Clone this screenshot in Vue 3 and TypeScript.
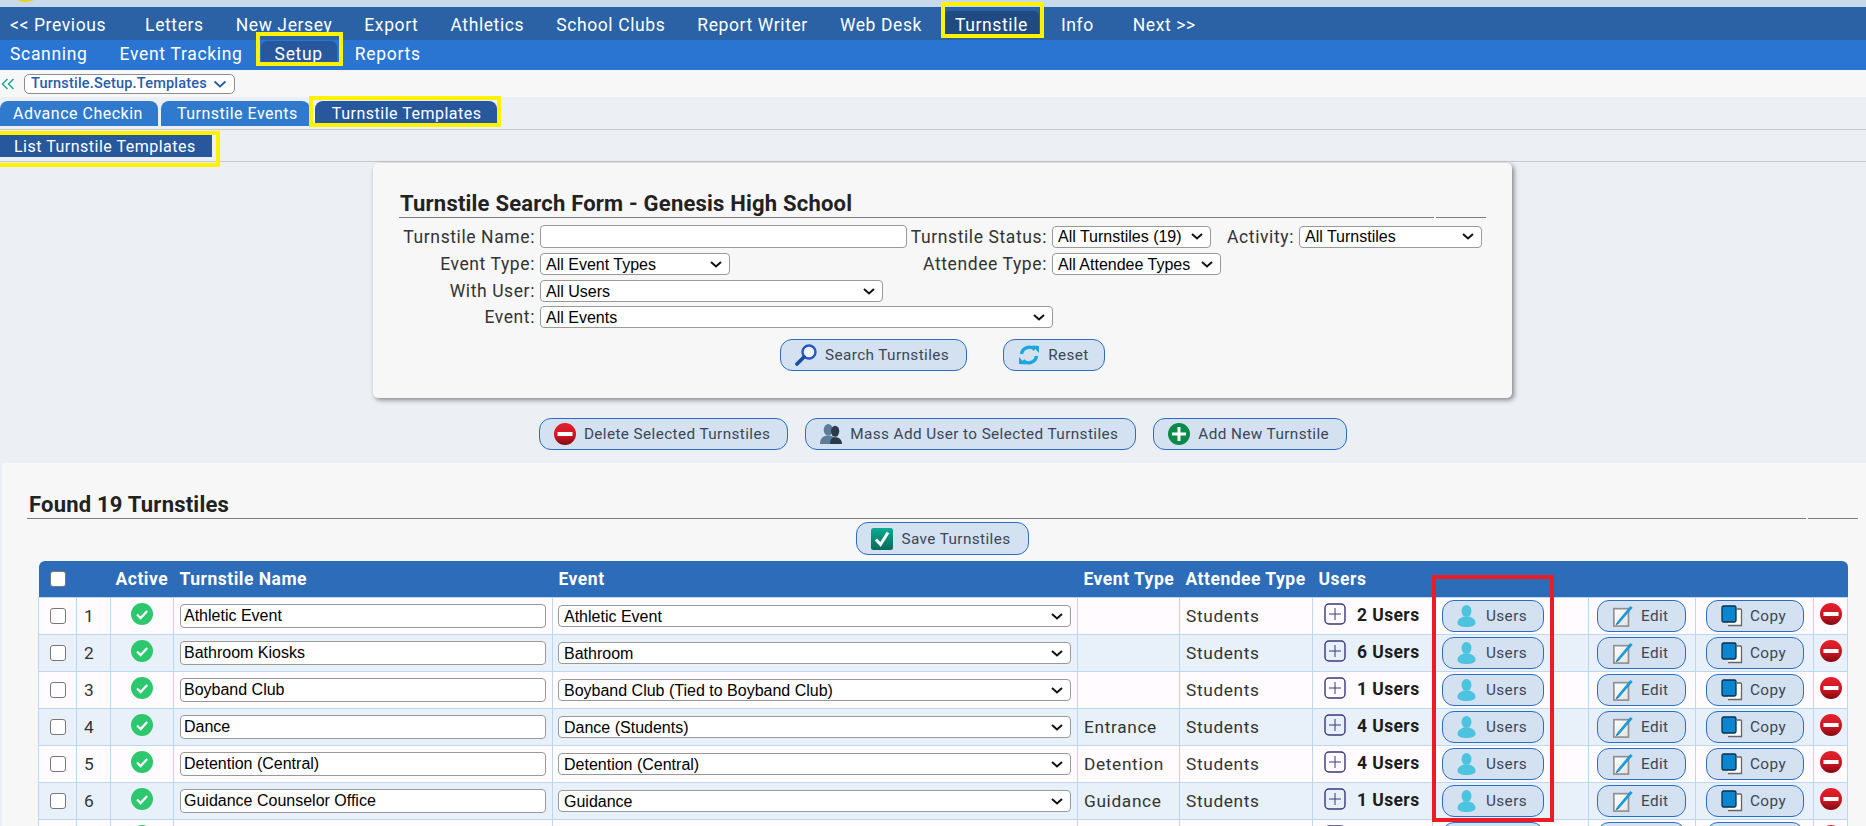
<script setup lang="ts">
interface Row { n: number; name: string; event: string; type: string; users: number; partial?: boolean }
const navMain = ['Letters', 'New Jersey', 'Export', 'Athletics', 'School Clubs', 'Report Writer', 'Web Desk']
const rows: Row[] = [
  { n: 1, name: 'Athletic Event', event: 'Athletic Event', type: '', users: 2 },
  { n: 2, name: 'Bathroom Kiosks', event: 'Bathroom', type: '', users: 6 },
  { n: 3, name: 'Boyband Club', event: 'Boyband Club (Tied to Boyband Club)', type: '', users: 1 },
  { n: 4, name: 'Dance', event: 'Dance (Students)', type: 'Entrance', users: 4 },
  { n: 5, name: 'Detention (Central)', event: 'Detention (Central)', type: 'Detention', users: 4 },
  { n: 6, name: 'Guidance Counselor Office', event: 'Guidance', type: 'Guidance', users: 1 },
  { n: 7, name: '', event: '', type: '', users: 0, partial: true }
]
</script>

<template>
  <div class="page">
    <svg class="sprite" aria-hidden="true">
      <defs>
        <linearGradient id="redG" x1="0" y1="0" x2="0" y2="1"><stop offset="0" stop-color="#e3202c" /><stop offset="0.55" stop-color="#d01722" /><stop offset="1" stop-color="#800a12" /></linearGradient>
        <linearGradient id="tealG" x1="0" y1="0" x2="0" y2="1"><stop offset="0" stop-color="#0bab92" /><stop offset="1" stop-color="#056b58" /></linearGradient>
        <linearGradient id="paperG" x1="0" y1="0" x2="1" y2="1"><stop offset="0" stop-color="#ffffff" /><stop offset="1" stop-color="#e2e2e2" /></linearGradient>
        <symbol id="i-check" viewBox="0 0 22 22"><circle cx="11" cy="11" r="11" fill="#2dc76d" /><path d="M6 11.500l3.600 3.600L16.200 8" fill="none" stroke="#fff" stroke-width="2.200" /></symbol>
        <symbol id="i-plus" viewBox="0 0 22 22"><rect x="1" y="1" width="20" height="20" rx="4" fill="none" stroke="#38387e" stroke-width="1.400" /><path d="M11 5v12M5 11h12" stroke="#38387e" stroke-width="1" /></symbol>
        <symbol id="i-user" viewBox="0 0 18 22"><ellipse cx="9" cy="6" rx="5" ry="6" fill="#4cc3df" /><path d="M0 18c0-4 3.500-5.500 6-6.500h6c2.500 1 6 2.500 6 6.500 0 2.500-4 4-9 4s-9-1.500-9-4z" fill="#4cc3df" /></symbol>
        <symbol id="i-edit" viewBox="0 0 22 24"><rect x="1" y="4" width="16" height="19" fill="url(#paperG)" stroke="#8f8f8f" stroke-width="1.800" /><path d="M4.500 18.500L19 1l2.500 2L6.500 20.500z" fill="#1a9ad6" /><path d="M4.500 18.500L3 22l3.500-1.500z" fill="#0c6c9c" /></symbol>
        <symbol id="i-copy" viewBox="0 0 22 22"><path d="M7 4h14v17H7z" fill="#fff" /><path d="M16 4h3.500q1 0 1 1v15.500H7" fill="none" stroke="#666" stroke-width="1.300" /><rect x="1" y="1" width="14" height="16" rx="1.500" fill="#0a86d0" stroke="#0b2f4a" stroke-width="1.300" /></symbol>
        <symbol id="i-del" viewBox="0 0 22 22"><circle cx="11" cy="11" r="11" fill="url(#redG)" /><rect x="3.500" y="9" width="15" height="4" fill="#fff" /></symbol>
        <symbol id="i-add" viewBox="0 0 22 22"><circle cx="11" cy="11" r="11" fill="#0a8a48" /><path d="M11 4v14M4 11h14" stroke="#fff" stroke-width="3" /></symbol>
        <symbol id="i-mass" viewBox="0 0 24 22"><ellipse cx="9" cy="6.500" rx="5" ry="6.500" fill="#5c7c98" /><path d="M0 22c0-6 3-8 6-9h6c3 1 5 3 5 9z" fill="#5c7c98" /><ellipse cx="16.500" cy="8" rx="4.500" ry="6" fill="#2b3b4b" /><path d="M11 22c0-5 1.500-6.500 4-7.500h3c3 1 6 2.500 6 7.500z" fill="#2b3b4b" /></symbol>
        <symbol id="i-search" viewBox="0 0 22 22"><circle cx="14" cy="8" r="6.500" fill="#eef2fd" stroke="#2658c4" stroke-width="2.400" /><path d="M9 13l-7 7" stroke="#1e4e9e" stroke-width="3.800" stroke-linecap="round" /></symbol>
        <symbol id="i-reset" viewBox="0 0 22 22"><path d="M3.500 10A8 8 0 0 1 17 5.500" fill="none" stroke="#1aa7e0" stroke-width="3.400" /><path d="M14 1.500L21 2v7z" fill="#1aa7e0" /><path d="M18.500 12A8 8 0 0 1 5 16.500" fill="none" stroke="#1aa7e0" stroke-width="3.400" /><path d="M8 20.500L1 20v-7z" fill="#1aa7e0" /></symbol>
        <symbol id="i-save" viewBox="0 0 22 22"><rect width="22" height="22" rx="2.500" fill="url(#tealG)" /><path d="M5 11.500l4.500 5L17 4.500" fill="none" stroke="#fff" stroke-width="3" /></symbol>
      </defs>
    </svg>

    <div class="topstrip"><span class="logo"></span></div>
    <nav class="nav nav-main">
      <a class="nav-item nav-edge">&lt;&lt; Previous</a>
      <a v-for="item in navMain" :key="item" class="nav-item">{{ item }}</a>
      <a class="nav-item active">Turnstile</a>
      <a class="nav-item">Info</a>
      <a class="nav-item nav-edge-next">Next &gt;&gt;</a>
    </nav>
    <nav class="nav nav-sub">
      <a class="nav-item">Scanning</a>
      <a class="nav-item">Event Tracking</a>
      <a class="nav-item active">Setup</a>
      <a class="nav-item">Reports</a>
    </nav>

    <div class="crumb">
      <svg class="crumb-back" viewBox="0 0 14 14"><path d="M6.500 2L1.500 7l5 5M12.500 2l-5 5 5 5" fill="none" stroke="#1ea790" stroke-width="1.500" /></svg>
      <span class="crumb-pill">Turnstile.Setup.Templates
        <svg class="crumb-chev" viewBox="0 0 14 8"><path d="M1.500 1.500L7 6.500l5.500-5" fill="none" stroke="#2a5caa" stroke-width="1.800" /></svg>
      </span>
    </div>

    <div class="tabs">
      <a class="tab">Advance Checkin</a>
      <a class="tab">Turnstile Events</a>
      <a class="tab active">Turnstile Templates</a>
    </div>
    <div class="subtabs">
      <a class="subtab">List Turnstile Templates</a>
    </div>

    <section class="card">
      <h2 class="title"><span>Turnstile Search Form - Genesis High School</span></h2>
      <div class="form">
        <label class="lbl">Turnstile Name:</label>
        <input class="inp w-name" type="text" />
        <label class="lbl">Turnstile Status:</label>
        <select class="sel w-status"><option>All Turnstiles (19)</option></select>
        <label class="lbl">Activity:</label>
        <select class="sel w-activity"><option>All Turnstiles</option></select>

        <label class="lbl">Event Type:</label>
        <select class="sel w-type"><option>All Event Types</option></select>
        <label class="lbl">Attendee Type:</label>
        <select class="sel w-att"><option>All Attendee Types</option></select>
        <span></span><span></span>

        <label class="lbl">With User:</label>
        <select class="sel w-user span3"><option>All Users</option></select>
        <span></span><span></span>

        <label class="lbl">Event:</label>
        <select class="sel w-event span3"><option>All Events</option></select>
      </div>
      <div class="card-actions">
        <button class="btn"><svg class="ic"><use href="#i-search" /></svg>Search Turnstiles</button>
        <button class="btn btn-reset"><svg class="ic"><use href="#i-reset" /></svg>Reset</button>
      </div>
    </section>

    <div class="actions">
      <button class="btn"><svg class="ic"><use href="#i-del" /></svg>Delete Selected Turnstiles</button>
      <button class="btn"><svg class="ic"><use href="#i-mass" /></svg>Mass Add User to Selected Turnstiles</button>
      <button class="btn"><svg class="ic"><use href="#i-add" /></svg>Add New Turnstile</button>
    </div>

    <main class="panel">
      <h2 class="title found-title"><span>Found 19 Turnstiles</span></h2>
      <div class="save-row">
        <button class="btn btn-save"><svg class="ic"><use href="#i-save" /></svg>Save Turnstiles</button>
      </div>
      <table class="grid">
        <colgroup>
          <col class="c1" /><col class="c2" /><col class="c3" /><col class="c4" /><col class="c5" /><col class="c6" /><col class="c7" /><col class="c8" /><col class="c9" /><col class="c10" /><col class="c11" /><col class="c12" />
        </colgroup>
        <thead>
          <tr>
            <th class="center"><input class="chk" type="checkbox" /></th>
            <th></th>
            <th class="th-active">Active</th>
            <th>Turnstile Name</th>
            <th>Event</th>
            <th>Event Type</th>
            <th>Attendee Type</th>
            <th>Users</th>
            <th></th><th></th><th></th><th></th>
          </tr>
        </thead>
        <tbody>
          <tr v-for="row in rows" :key="row.n">
            <td class="center"><input class="chk" type="checkbox" /></td>
            <td class="num">{{ row.partial ? '' : row.n }}</td>
            <td class="center"><svg class="i22 raise"><use href="#i-check" /></svg></td>
            <td><input class="inp row-inp" type="text" :value="row.name" /></td>
            <td class="ev"><select class="sel row-sel"><option>{{ row.event }}</option></select></td>
            <td class="txt">{{ row.type }}</td>
            <td class="txt">{{ row.partial ? '' : 'Students' }}</td>
            <td class="users-cell"><svg class="i22"><use href="#i-plus" /></svg><b>{{ row.partial ? '' : row.users + ' Users' }}</b></td>
            <td class="b-users"><button class="btn btn-row"><svg class="ic ic-user"><use href="#i-user" /></svg>{{ row.partial ? '' : 'Users' }}</button></td>
            <td class="b-edit"><button class="btn btn-row"><svg class="ic ic-edit"><use href="#i-edit" /></svg>{{ row.partial ? '' : 'Edit' }}</button></td>
            <td class="b-copy"><button class="btn btn-row"><svg class="ic ic-copy"><use href="#i-copy" /></svg>{{ row.partial ? '' : 'Copy' }}</button></td>
            <td class="center"><svg class="i22 raise"><use href="#i-del" /></svg></td>
          </tr>
        </tbody>
      </table>
    </main>

    <i class="mark yellow m1"></i>
    <i class="mark yellow m2"></i>
    <i class="mark yellow m3"></i>
    <i class="mark yellow m4"></i>
    <i class="mark red m5"></i>
  </div>
</template>

<style>
html, body { margin: 0; height: 100%; overflow: hidden; background: #eceff4; }
</style>

<style scoped>
.page { position: relative; width: 1866px; height: 826px; overflow: hidden; font-family: Roboto, "Liberation Sans", sans-serif; color: #333; background: #eceff4; }
.sprite { position: absolute; width: 0; height: 0; }

.topstrip { height: 7px; background: #c9d9ec; position: relative; overflow: hidden; }
.logo { position: absolute; left: 14px; top: -10px; width: 23px; height: 12px; border-radius: 50%; background: #e8d41c; }

.nav { display: flex; align-items: flex-end; color: #fff; font-size: 17.5px; letter-spacing: 0.6px; }
.nav-main { height: 33px; background: #2a62a5; padding-left: 10px; }
.nav-sub { height: 30px; background: #2b75d2; padding-left: 10px; letter-spacing: 0.68px; }
.nav-item { display: flex; align-items: center; padding: 0 16px; white-space: nowrap; }
.nav-main .nav-item { height: 27px; margin-bottom: 2px; }
.nav-sub .nav-item { height: 25px; margin-bottom: 4px; }
.nav-item:first-child { padding-left: 0; }
.nav-edge { margin-right: 7px; }
.nav-edge-next { margin-left: 7px; }
.nav-item.active { background: #204a82; border-radius: 5px 5px 0 0; padding: 0 11px; margin-left: 6px; margin-right: 6px; }
.nav-sub .nav-item.active { background: #27589e; padding: 0 14px; margin-left: 2px; margin-right: 2px; border-radius: 6px; }

.crumb { height: 27px; background: #f7f7f7; display: flex; align-items: center; }
.crumb-back { width: 14px; height: 14px; margin: 0 9px 0 1px; }
.crumb-pill { display: flex; align-items: center; box-sizing: border-box; height: 20px; width: 211px; padding-left: 6px; background: #fff; border: 1px solid #8d8d8d; border-radius: 5px; color: #2a5caa; font-size: 14.5px; font-weight: 500; letter-spacing: 0.2px; white-space: nowrap; }
.crumb-chev { width: 14px; height: 8px; margin-left: 6px; }

.tabs { height: 33px; box-sizing: border-box; border-bottom: 1px solid #c8c8c8; display: flex; align-items: flex-end; padding-bottom: 3px; gap: 3px; }
.tab { display: flex; align-items: center; height: 25px; padding: 0 15px 0 13px; background: #2f7acc; color: #fff; font-size: 16px; letter-spacing: 0.5px; border-radius: 8px 8px 0 0; white-space: nowrap; }
.tab:nth-child(2) { padding: 0 12px 0 16px; }
.tab.active { background: #27589e; margin-left: 2px; padding: 0 15px 0 17px; }
.subtabs { height: 32px; box-sizing: border-box; border-bottom: 1px solid #c8c8c8; padding-top: 4px; }
.subtab { display: flex; align-items: center; width: 212px; box-sizing: border-box; height: 23px; padding: 1px 0 0 14px; background: #27589e; color: #fff; font-size: 16px; letter-spacing: 0.5px; white-space: nowrap; }

.card { box-sizing: border-box; width: 1139px; height: 235px; margin: 1px 0 0 373px; padding: 28px 26px 0 26px; background: #f7f7f7; border-radius: 5px; box-shadow: 2px 2px 5px rgba(0,0,0,.45); }
.title { display: flex; gap: 2px; margin: 0; font-size: 22px; line-height: 26px; font-weight: 700; color: #222; letter-spacing: 0.21px; }
.title span { flex: 1; border-bottom: 1px solid #7a7a7a; padding-left: 1px; }
.title::after { content: ''; width: 50px; border-bottom: 1px solid #7a7a7a; }
.form { display: grid; grid-template-columns: 141px 372px 140px 174px 73px 183px; grid-template-rows: 27px 28px 26px 26px; margin-top: 5px; }
.lbl { font-size: 17.5px; letter-spacing: 0.6px; color: #333; padding-right: 5px; align-self: center; white-space: nowrap; justify-self: end; }
.inp, .sel { box-sizing: border-box; font-family: "Liberation Sans", Arial, sans-serif; font-size: 16px; color: #000; background-color: #fff; border: 1px solid #999; border-radius: 4px; align-self: center; justify-self: start; }
.inp { height: 23px; padding: 0 3px; outline: none; }
.sel { appearance: none; height: 22px; padding: 0 22px 0 5px; background-image: url("data:image/svg+xml,%3Csvg xmlns='http://www.w3.org/2000/svg' width='12' height='7' viewBox='0 0 12 7'%3E%3Cpath d='M1 1l5 4.500 5-4.500' fill='none' stroke='%23111' stroke-width='2'/%3E%3C/svg%3E"); background-repeat: no-repeat; background-position: right 7px center; }
.span3 { grid-column: span 3; }
.w-name { width: 367px; }
.w-status { width: 159px; }
.w-activity { width: 183px; }
.w-type { width: 190px; }
.w-att { width: 169px; }
.w-user { width: 343px; }
.w-event { width: 513px; }

.card-actions { display: flex; gap: 36px; margin: 9px 0 0 381px; }
.btn { display: inline-flex; align-items: center; box-sizing: border-box; height: 32px; padding: 0 17px 0 14px; background: #d3e1f1; border: 1px solid #2a6cc6; border-radius: 12px; color: #3c4656; font-family: Roboto, sans-serif; font-size: 15.3px; letter-spacing: 0.4px; white-space: nowrap; }
.btn-save { height: 33px; }
.btn-reset { padding-right: 15px; }
.ic { width: 22px; height: 22px; margin-right: 8px; flex: none; }

.actions { display: flex; justify-content: center; gap: 17px; margin-top: 20px; height: 32px; padding-left: 20px; }
.panel { box-sizing: border-box; height: 363px; margin: 13px 0 0 2px; padding: 29px 8px 0 25px; background: #f7f7f7; position: relative; }
.found-title span { padding-left: 2px; }
.save-row { display: flex; justify-content: center; margin: 3px 0 6px; width: 1831px; }

.grid { table-layout: fixed; width: 1809px; margin-left: 11px; border-collapse: collapse; font-size: 17.3px; }
.c1 { width: 38px; } .c2 { width: 34px; } .c3 { width: 63px; } .c4 { width: 379px; } .c5 { width: 525px; } .c6 { width: 102px; }
.c7 { width: 133px; } .c8 { width: 120px; } .c9 { width: 156px; } .c10 { width: 107px; } .c11 { width: 118px; } .c12 { width: 34px; }
thead tr { height: 36px; background: #2c6cb9; color: #fff; }
th { text-align: left; font-weight: 700; padding: 0 0 0 6px; font-size: 17.5px; letter-spacing: 0.5px; white-space: nowrap; }
th.th-active { padding-left: 5px; }
th:first-child { border-top-left-radius: 6px; padding: 0; }
th:last-child { border-top-right-radius: 6px; }
tbody tr { height: 37px; background: #fffbff; }
tbody tr:nth-child(even) { background: #e8f1f9; }
td { border: 1px solid #bcd7f2; padding: 0 0 0 6px; overflow: hidden; white-space: nowrap; }
td.ev { padding-left: 5px; }
.center { text-align: center; padding: 0; }
.num { padding-left: 7px; }
.txt { letter-spacing: 0.65px; }
.chk { appearance: none; display: block; box-sizing: border-box; width: 16px; height: 16px; margin: 0 auto; background: #fff; border: 1px solid #777; border-radius: 3px; }
.i22 { width: 22px; height: 22px; }
.raise { display: block; margin: -4px auto 0; }
.row-inp { display: block; width: 366px; height: 24px; margin-top: 1px; }
.row-sel { display: block; width: 513px; margin-top: 1px; }
.users-cell { padding-left: 11px; }
.users-cell .i22 { display: inline-block; vertical-align: middle; margin: 0 11px 4px 0; }
.users-cell b { font-weight: 700; font-size: 17.5px; letter-spacing: 0.4px; color: #1c1c1c; }
.b-users { padding-left: 9px; }
.b-edit { padding-left: 8px; }
.b-copy { padding-left: 10px; }
.btn-row { display: flex; padding: 0 0 0 14px; }
.b-users .btn-row { width: 102px; }
.b-edit .btn-row { width: 89px; }
.b-copy .btn-row { width: 98px; }
.ic-user { width: 19px; margin-right: 10px; }
.ic-edit { margin-right: 7px; }
.ic-copy { margin-right: 7px; }

.mark { position: absolute; box-sizing: border-box; display: block; }
.yellow { border: 4px solid #fff200; }
.red { border: 4.500px solid #ed1c24; }
.m1 { left: 941px; top: 2px; width: 103px; height: 36px; }
.m2 { left: 256px; top: 32px; width: 87px; height: 34px; }
.m3 { left: 309px; top: 96px; width: 192px; height: 31px; }
.m4 { left: -5px; top: 131px; width: 225px; height: 36px; }
.m5 { left: 1432px; top: 575px; width: 122px; height: 247px; }
</style>
